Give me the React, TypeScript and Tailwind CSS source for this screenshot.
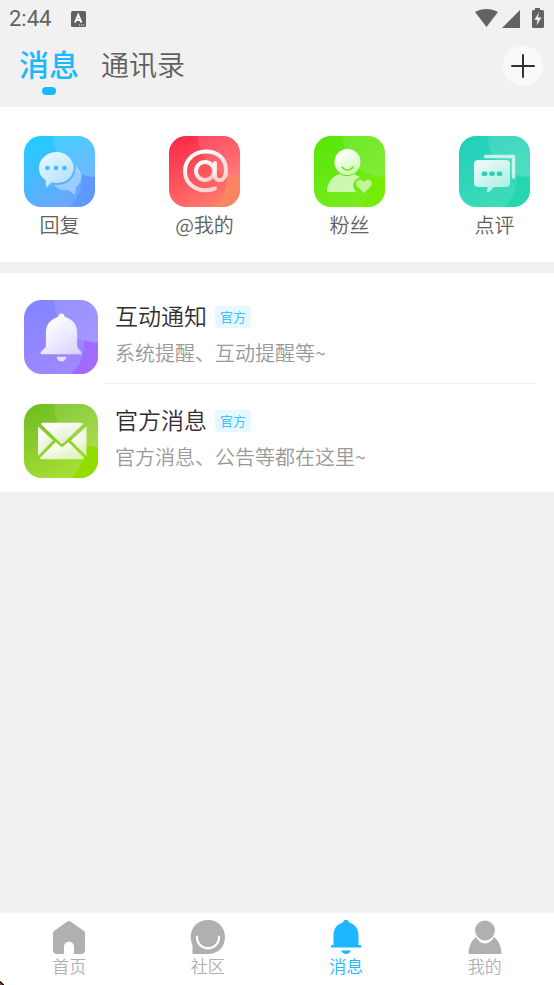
import React from "react";

type TileProps = {
  id: string;
  from: string;
  to: string;
  corner: string;
  className: string;
  children: React.ReactNode;
};

function Tile({ id, from, to, corner, className, children }: TileProps) {
  return (
    <svg viewBox="0 0 71 71" className={className} aria-hidden="true">
      <defs>
        <linearGradient id={id + "-bg"} x1="0.1" y1="0" x2="0.6" y2="1">
          <stop offset="0" stopColor={from} />
          <stop offset="1" stopColor={to} />
        </linearGradient>
        <linearGradient id={id + "-fg"} x1="0" y1="0" x2="0.8" y2="1">
          <stop offset="0.2" stopColor="#fff" />
          <stop offset="1" stopColor="#fff" stopOpacity="0.65" />
        </linearGradient>
        <clipPath id={id + "-clip"}>
          <rect width="71" height="71" rx="17" />
        </clipPath>
      </defs>
      <g clipPath={`url(#${id}-clip)`}>
        <rect width="71" height="71" fill={`url(#${id}-bg)`} />
        <path d="M58 38C58 53 54 63 45 71H71V41Q64 41 58 38Z" fill={corner} />
        <path d="M29 0C29 23 47 41 71 41V0Z" fill="#fff" fillOpacity="0.12" />
      </g>
      {children}
    </svg>
  );
}

const shortcuts = [
  {
    label: "回复",
    icon: (
      <Tile id="reply" from="#1fcdff" to="#6da5ff" corner="#5f98ff" className="size-[71px]">
        <path
          d="M52 30C59 36 59 46 52 51L51 59L44 54C38 55 33 53 30 49C43 50 52 42 52 30Z"
          fill="#fff"
          fillOpacity="0.38"
        />
        <path
          d="M32.500 16C42 16 49.500 23 49.500 32C49.500 41 42 47 32.500 47C31 47 29 47 28 46L22 52L21.500 44C17 41 15 37 15 32C15 23 23 16 32.500 16Z"
          fill="url(#reply-fg)"
          fillOpacity="0.85"
        />
        <g fill="#43b8fb">
          <circle cx="23.500" cy="32" r="2.300" />
          <circle cx="32" cy="32" r="2.300" />
          <circle cx="40.500" cy="32" r="2.300" />
        </g>
      </Tile>
    ),
  },
  {
    label: "@我的",
    icon: (
      <Tile id="mention" from="#fb2748" to="#ff7a6d" corner="#fb8563" className="size-[71px]">
        <g fill="none" stroke="url(#mention-fg)" strokeLinecap="round">
          <circle cx="36" cy="35" r="9" strokeWidth="4" />
          <path
            d="M46 27V40C46 46 57 47 57 34C57 22 48 15.500 37 15.500C25 15.500 16 24 16 35C16 50 31 58 46 52.500"
            strokeWidth="4"
          />
        </g>
      </Tile>
    ),
  },
  {
    label: "粉丝",
    icon: (
      <Tile id="fans" from="#56e60a" to="#79ec1d" corner="#74ec05" className="size-[71px]">
        <path
          d="M26 38C30 41 36 41 40 38L46 41C39 44 37 50 42 56H13C13 47 18 40 26 38Z"
          fill="#fff"
          fillOpacity="0.65"
        />
        <circle cx="33.500" cy="26" r="13" fill="url(#fans-fg)" />
        <path d="M28 31C31 35 36 35 39 31" fill="none" stroke="#62e31a" strokeWidth="1.300" strokeLinecap="round" />
        <path
          d="M50 57L43 50C40 45 46 41 50 46C54 41 60 45 57 50Z"
          fill="#fff"
          fillOpacity="0.55"
        />
      </Tile>
    ),
  },
  {
    label: "点评",
    icon: (
      <Tile id="review" from="#20cfba" to="#3edcb9" corner="#25d6ae" className="size-[71px]">
        <path
          d="M26.500 20.500H54.500V41"
          fill="none"
          stroke="#fff"
          strokeOpacity="0.7"
          strokeWidth="3.600"
          strokeLinecap="round"
          strokeLinejoin="round"
        />
        <path
          d="M19 24H47Q51 24 51 28V47Q51 51 47 51H35L30 56Q27 57 28 54L29 51H19Q15 51 15 47V28Q15 24 19 24Z"
          fill="url(#review-fg)"
          fillOpacity="0.88"
        />
        <g fill="#2dcfb5">
          <rect x="22.500" y="35.500" width="6" height="4.500" rx="2.200" />
          <rect x="30" y="35.500" width="6" height="4.500" rx="2.200" />
          <rect x="37.500" y="35.500" width="6" height="4.500" rx="2.200" />
        </g>
      </Tile>
    ),
  },
];

function BellTile() {
  return (
    <Tile id="bell" from="#8285ff" to="#a288ff" corner="#a26bff" className="size-[74px]">
      <path
        d="M33 16C33 12 39 12 39 16C46 18 51 23 51 31V45L55 50V52H16V50L21 45V31C21 23 26 18 33 16Z"
        fill="url(#bell-fg)"
      />
      <path d="M31.500 54.500H40.500C40.500 60.500 31.500 60.500 31.500 54.500Z" fill="#fff" fillOpacity="0.75" />
    </Tile>
  );
}

function MailTile() {
  return (
    <Tile id="mail" from="#6fbd22" to="#a9df35" corner="#91dd00" className="size-[74px]">
      <g fill="url(#mail-fg)">
        <path d="M18 18H55L57 19L38 37.500Q36.500 39 35 37.500L16 19Z" />
        <path d="M13.500 21.500L28 35L13.500 50Z" />
        <path d="M60 21.500V50L45 35Z" />
        <path d="M30.500 36.500L35 40.500Q36.500 41.500 38 40.500L42.500 36.500L58 52Q57 53 56 53H17Q16 53 15 52Z" />
      </g>
    </Tile>
  );
}

const notices = [
  { title: "互动通知", text: "系统提醒、互动提醒等~", icon: <BellTile /> },
  { title: "官方消息", text: "官方消息、公告等都在这里~", icon: <MailTile /> },
];

const tabs = [
  {
    label: "首页",
    icon: (
      <path d="M16.500 1.500Q18 0.500 19.500 1.500L33 11Q34 12 34 13.500V30Q34 34 30 34H23V27C23 20 13 20 13 27V34H6Q2 34 2 30V13.500Q2 12 3 11Z" />
    ),
  },
  {
    label: "社区",
    icon: (
      <>
        <path d="M18 0C28 0 35 7.500 35 17C35 27 28 34 18 34H2.500V25C-3 12 5 0 18 0Z" />
        <path d="M7 17C7 32 29 32 29 17" fill="none" stroke="#fff" strokeWidth="2.300" strokeLinecap="round" />
      </>
    ),
  },
  {
    label: "消息",
    icon: (
      <>
        <path d="M15 2.500C15 -1 21 -1 21 2.500C27 4 30.500 9 30.500 15V25H33V27.500H3V25H5.500V15C5.500 9 9 4 15 2.500Z" />
        <path d="M13 30.500H23C21 35 15 35 13 30.500Z" />
      </>
    ),
    active: true,
  },
  {
    label: "我的",
    icon: (
      <>
        <circle cx="18" cy="10.500" r="10" />
        <path d="M9 17C13 25.500 23 25.500 27 17C31 20 34.500 26 34.500 34H1.500C1.500 26 5 20 9 17Z" />
      </>
    ),
  },
];

function StatusBar() {
  return (
    <div className="flex h-[38px] items-center justify-between px-[9px] text-[#626262]">
      <div className="flex items-center gap-5">
        <span className="font-[Roboto,sans-serif] text-[22px] leading-[38px] font-normal">2:44</span>
        <svg viewBox="0 0 15 16" className="h-4 w-[15px]" aria-hidden="true">
          <rect width="15" height="16" rx="1.500" fill="currentColor" />
          <path d="M4 11.500L7.200 4L10.500 11.500M5.200 9H9.300" fill="none" stroke="#fff" strokeWidth="1.900" />
          <path d="M8 14H13.500" stroke="#fff" strokeWidth="1" strokeDasharray="1 1" />
        </svg>
      </div>
      <svg viewBox="0 0 70 22" className="h-[22px] w-[70px]" fill="currentColor" aria-hidden="true">
        <path d="M0 4C7 0 16 0 23 4L11.500 19Z" />
        <path d="M45 2V20H27Z" />
        <path d="M60 2V0H65V2H67.500Q69 2 69 3.500V18.500Q69 20 67.500 20H58.500Q57 20 57 18.500V3.500Q57 2 58.500 2Z" />
        <path d="M64 4L59.500 12H62.500L61.500 17.500L66.500 9.500H63Z" fill="#f1f1f1" />
      </svg>
    </div>
  );
}

export default function App() {
  return (
    <div className="relative flex min-h-screen flex-col bg-[#f1f1f1] font-['Noto_Sans_CJK_SC',sans-serif] font-[350] text-[#606060]">
      <StatusBar />
      <header className="flex h-[69px] items-start justify-between pr-[11px] pl-[19px]">
        <nav className="flex items-start gap-[22px]" aria-label="消息分类">
          <button type="button" className="flex flex-col items-center text-[30px] leading-[50px] font-medium text-[#1bb8ff]">
            <span>消息</span>
            <span className="-mt-px h-2 w-3.5 rounded-full bg-[#1bb8ff]" />
          </button>
          <button type="button" className="pt-px text-[28px] leading-[50px]">
            通讯录
          </button>
        </nav>
        <button
          type="button"
          aria-label="添加"
          className="mt-2 flex size-10 items-center justify-center rounded-full bg-[#f9f9f9] text-[#303030]"
        >
          <svg viewBox="0 0 24 24" className="size-6" aria-hidden="true">
            <path d="M12 1V23M1 12H23" stroke="currentColor" strokeWidth="2" strokeLinecap="round" />
          </svg>
        </button>
      </header>

      <main>
        <section className="flex justify-between bg-white px-6 pt-[29px] pb-[22px]">
          {shortcuts.map((item) => (
            <button key={item.label} type="button" className="flex w-[71px] flex-col items-center gap-[3px] text-[20px] leading-[30px]">
              {item.icon}
              <span>{item.label}</span>
            </button>
          ))}
        </section>

        <ul className="mt-[11px] bg-white pt-[27px]">
          {notices.map((item) => (
            <li key={item.title} className="group flex items-start pr-[18px] pl-6 last:pt-5 last:pb-1">
              {item.icon}
              <div className="ml-1.5 flex-1 border-b border-[#f2f2f2] pb-[15px] pl-[11px] group-last:border-white">
                <div className="flex items-center gap-2">
                  <h2 className="text-[23px] leading-[30px] font-[350] text-[#303030]">{item.title}</h2>
                  <span className="mt-1 rounded-[3px] bg-[#e6f8ff] px-[5px] text-[13px] leading-[22px] text-[#1bb8ff]">官方</span>
                </div>
                <p className="pt-2 text-[20px] leading-[30px] text-[#999999]">{item.text}</p>
              </div>
            </li>
          ))}
        </ul>
      </main>

      <nav className="mt-auto grid h-[73px] grid-cols-4 border-t border-[#f8f8f8] bg-white" aria-label="主导航">
        {tabs.map((tab) => (
          <a
            key={tab.label}
            href="#"
            aria-current={tab.active ? "page" : undefined}
            className={
              tab.active
                ? "flex flex-col items-center pt-[7px] text-[#1bb8ff]"
                : "flex flex-col items-center pt-[7px] text-[#b0b0b0]"
            }
          >
            <svg viewBox="0 0 36 34" className="h-[34px] w-9" fill="currentColor" aria-hidden="true">
              {tab.icon}
            </svg>
            <span className="text-[17px] leading-[24px]">{tab.label}</span>
          </a>
        ))}
      </nav>
      <svg viewBox="0 0 4 4" className="absolute bottom-0 left-0 size-1" aria-hidden="true">
        <path d="M0 0H1V1H2V2H3V3H4V4H0Z" fill="#26100e" />
        <path d="M0 2H1V3H2V4H0Z" fill="#80483f" />
      </svg>
    </div>
  );
}
